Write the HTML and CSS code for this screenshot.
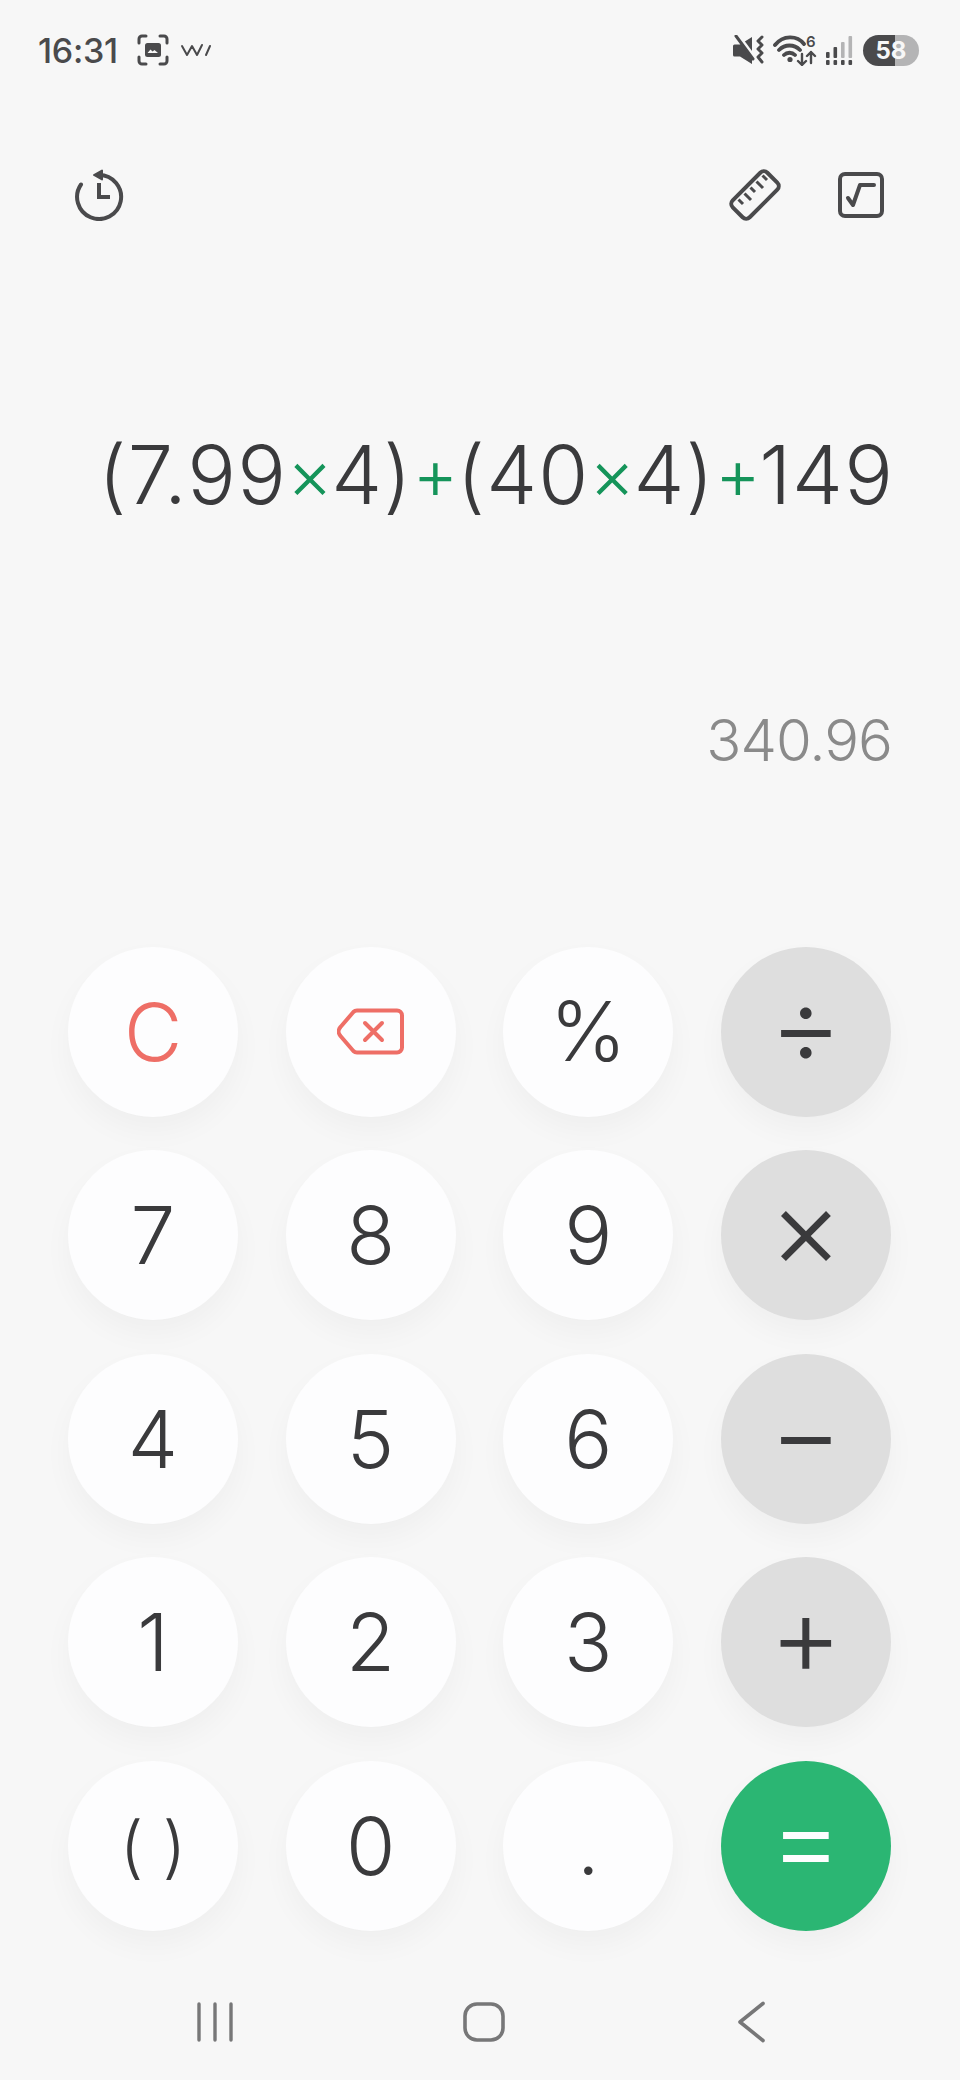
FILE: index.html
```html
<!DOCTYPE html>
<html lang="en">
<head>
<meta charset="utf-8">
<title>Calculator</title>
<link rel="stylesheet" href="styles.css">
</head>
<body>
<main class="phone">
  <header class="status">
    <div class="status-left">
      <span class="clock">16:31</span>
      <svg class="ic-capture" width="32" height="32" viewBox="0 0 32 32" fill="none" stroke="#4a4a4c" stroke-width="3" stroke-linecap="round" stroke-linejoin="round">
        <path d="M2 9V5a3 3 0 0 1 3-3h4M23 2h4a3 3 0 0 1 3 3v4M30 23v4a3 3 0 0 1-3 3h-4M9 30H5a3 3 0 0 1-3-3v-4"/>
        <rect x="8" y="9" width="16" height="14" rx="2.500" fill="#4a4a4c" stroke="none"/>
        <path d="M10.500 19l3-3.500 2 2 2-1.500 3.500 3z" fill="#f7f7f7" stroke="none"/>
      </svg>
      <svg class="ic-wave" width="32" height="14" viewBox="0 0 32 14" fill="none" stroke="#4a4a4c" stroke-width="2" stroke-linecap="round" stroke-linejoin="round">
        <path d="M2 3l5 9 5-9 5 9 5-10M26 12l4-9"/>
      </svg>
    </div>
    <div class="status-right">
      <svg width="32" height="30" viewBox="0 0 32 30" fill="#4a4a4c">
        <path d="M0 11q0-1.500 1.500-1.500H7L19 2v27L7 21.500H1.500Q0 21.500 0 20z"/>
        <path d="M5 0l17 23" stroke="#f7f7f7" stroke-width="3.500"/>
        <path d="M3 1l17 23" stroke="#4a4a4c" stroke-width="3" stroke-linecap="round"/>
        <path d="M29 2l-4 4 4 4-4 4 4 4-4 4 4 5" fill="none" stroke="#4a4a4c" stroke-width="3" stroke-linecap="round" stroke-linejoin="round"/>
      </svg>
      <div class="wifi">
        <svg width="44" height="32" viewBox="0 0 44 32" fill="none" stroke="#4a4a4c" stroke-width="3.800" stroke-linecap="round" stroke-linejoin="round">
          <path d="M2 11C10 1 24 1 31 10M6 16c6-6 15-6 21 0M11 21c3-3 8-3 11 0"/>
          <circle cx="17" cy="25.500" r="2.600" fill="#4a4a4c" stroke="none"/>
          <path d="M29 20v11M25 27l4 4 4-4M38 29V18M34 22l4-4 4 4" stroke-width="2.400"/>
        </svg>
        <span class="wifi-num">6</span>
      </div>
      <svg width="28" height="32" viewBox="0 0 28 32" fill="#4a4a4c">
        <rect x="1" y="18" width="3.600" height="6" rx="1"/>
        <rect x="8.500" y="13" width="3.600" height="11" rx="1"/>
        <rect x="16" y="8" width="3.600" height="16" rx="1" fill="#b4b4b5"/>
        <rect x="23.500" y="2" width="3.600" height="22" rx="1" fill="#b4b4b5"/>
        <rect x="1" y="26" width="3.600" height="5" rx="1"/>
        <rect x="8.500" y="26" width="3.600" height="5" rx="1"/>
        <rect x="16" y="26" width="3.600" height="5" rx="1"/>
        <rect x="23.500" y="26" width="3.600" height="5" rx="1"/>
      </svg>
      <span class="battery">58</span>
    </div>
  </header>

  <nav class="tools">
    <svg width="52" height="52" viewBox="0 0 52 52" fill="none" stroke="#4a4a4c" stroke-width="4" stroke-linecap="round" stroke-linejoin="round">
      <path d="M26 6A22 22 0 1 1 8 15.500"/>
      <path d="M21 6l8-4.500v9z" fill="#4a4a4c" stroke-width="2"/>
      <path d="M26 14v14h11" stroke-linecap="butt" stroke-linejoin="miter"/>
    </svg>
    <div class="tools-right">
      <svg width="54" height="54" viewBox="0 0 54 54" fill="none" stroke="#4a4a4c" stroke-width="4" stroke-linecap="round" stroke-linejoin="round">
        <rect x="2.500" y="15" width="49" height="24" rx="5" transform="rotate(-45 27 27)"/>
        <path d="M12 30l4.500 4.500M18 24l6.500 6.500M24 18l4.500 4.500M30 12l6.500 6.500M36 6l4.500 4.500" stroke-width="3" stroke-linecap="butt" transform="translate(-1.500 1.500)"/>
      </svg>
      <svg width="46" height="46" viewBox="0 0 46 46" fill="none" stroke="#4a4a4c" stroke-width="4" stroke-linecap="round" stroke-linejoin="round">
        <rect x="2" y="2" width="42" height="42" rx="5"/>
        <path d="M10 26l5 7 7-20h14"/>
      </svg>
    </div>
  </nav>

  <section class="display">
    <div class="expression">(7.99<span class="op">×</span>4)<span class="op">+</span>(40<span class="op">×</span>4)<span class="op">+</span>149</div>
    <div class="result">340.96</div>
  </section>

  <section class="keypad">
    <button class="key danger">C</button>
    <button class="key" aria-label="Backspace">
      <svg width="67" height="47" viewBox="0 0 67 47" fill="none" stroke="#ee6e66" stroke-width="4" stroke-linecap="round" stroke-linejoin="round">
        <path d="M20 2.500h40a5 5 0 0 1 5 5v32a5 5 0 0 1-5 5H20a5 5 0 0 1-3.600-1.500L3.500 28a6.500 6.500 0 0 1 0-9L16.400 4a5 5 0 0 1 3.600-1.500z"/>
        <path d="M28 15l17 17M45 15L28 32"/>
      </svg>
    </button>
    <button class="key pct">%</button>
    <button class="key func"><span class="sym">÷</span></button>
    <button class="key">7</button>
    <button class="key">8</button>
    <button class="key">9</button>
    <button class="key func"><span class="sym">×</span></button>
    <button class="key">4</button>
    <button class="key">5</button>
    <button class="key">6</button>
    <button class="key func"><span class="sym">−</span></button>
    <button class="key">1</button>
    <button class="key">2</button>
    <button class="key">3</button>
    <button class="key func"><span class="sym">+</span></button>
    <button class="key paren">( )</button>
    <button class="key">0</button>
    <button class="key dot">.</button>
    <button class="key equals"><span class="sym">=</span></button>
  </section>

  <footer class="navbar">
    <svg width="36" height="40" viewBox="0 0 36 40" fill="none" stroke="#777778" stroke-width="3.400" stroke-linecap="round">
      <path d="M2 2v36M18 2v36M34 2v36"/>
    </svg>
    <svg width="42" height="40" viewBox="0 0 42 40" fill="none" stroke="#777778" stroke-width="3.600">
      <rect x="2" y="2" width="38" height="36" rx="12"/>
    </svg>
    <svg width="28" height="42" viewBox="0 0 28 42" fill="none" stroke="#777778" stroke-width="3.600" stroke-linecap="round" stroke-linejoin="round">
      <path d="M25 2.500L2 21l23 18.500"/>
    </svg>
  </footer>
</main>
</body>
</html>
```
FILE: styles.css
```css
* { box-sizing: border-box; }

html, body {
  margin: 0;
  background: #f7f7f7;
}

.phone {
  width: 960px;
  height: 2080px;
  display: flex;
  flex-direction: column;
  overflow: hidden;
  font-family: Inter, "Liberation Sans", sans-serif;
  color: #3a3a3c;
}

/* Status bar */
.status {
  height: 100px;
  padding: 0 41px 0 38px;
  display: flex;
  justify-content: space-between;
  align-items: center;
}

.status-left,
.status-right {
  display: flex;
  align-items: center;
}

.clock {
  font-size: 34px;
  font-weight: 500;
  color: #4a4a4c;
  letter-spacing: -0.3px;
}

.ic-capture { margin-left: 19px; }
.ic-wave { margin-left: 11px; }

.status-right { gap: 8px; }

.wifi {
  position: relative;
  height: 32px;
}

.wifi-num {
  position: absolute;
  top: -1px;
  left: 33px;
  font-size: 15px;
  line-height: 18px;
  font-weight: 600;
  color: #4a4a4c;
}

.battery {
  width: 56px;
  height: 31px;
  margin-left: 2px;
  border-radius: 16px;
  background: linear-gradient(90deg, #4a4a4c 0 57%, #b4b4b5 57% 100%);
  color: #f7f7f7;
  font-size: 24px;
  font-weight: 700;
  line-height: 31px;
  text-align: center;
}

/* Top tools */
.tools {
  height: 100px;
  margin-top: 45px;
  padding: 0 76px 0 73px;
  display: flex;
  justify-content: space-between;
  align-items: center;
}

.tools-right {
  display: flex;
  align-items: center;
  gap: 56px;
}

/* Expression and result */
.display {
  height: 701.700px;
  padding-right: 66px;
  text-align: right;
}

.expression {
  height: 100px;
  margin-top: 179px;
  font-size: 81px;
  font-weight: 300;
  line-height: 100px;
  letter-spacing: 1.100px;
  white-space: nowrap;
}

.expression .op {
  color: #15945a;
  font-size: 70px;
  font-weight: 350;
  letter-spacing: -1.500px;
  vertical-align: 5px;
}

.result {
  margin-top: 181px;
  font-size: 58px;
  font-weight: 300;
  line-height: 70px;
  letter-spacing: -1px;
  padding-right: 2px;
  color: #8a8a8a;
}

/* Keys */
.keypad {
  padding-left: 68px;
  display: grid;
  grid-template-columns: repeat(4, 170px);
  grid-auto-rows: 170px;
  column-gap: 47.600px;
  row-gap: 33.600px;
}

.key {
  border: 0;
  padding: 0;
  border-radius: 50%;
  background: #fdfdfe;
  box-shadow: 0 14px 30px rgba(0, 0, 0, 0.035);
  font-family: inherit;
  font-size: 80px;
  font-weight: 300;
  color: #3a3a3c;
  display: flex;
  align-items: center;
  justify-content: center;
  line-height: 1;
}

.danger { color: #ee6e66; }
.pct { font-size: 82px; }
.paren { font-size: 68px; font-weight: 300; }
.func { background: #dedede; }
.equals { background: #2bb673; color: #fdfdfe; }

.sym {
  font-size: 112px;
  font-weight: 350;
  margin-bottom: 16px;
}

/* System navigation */
.navbar {
  padding: 70px 0 0 81px;
  display: grid;
  grid-template-columns: repeat(3, 268.500px);
  justify-items: center;
  align-items: center;
}
```
